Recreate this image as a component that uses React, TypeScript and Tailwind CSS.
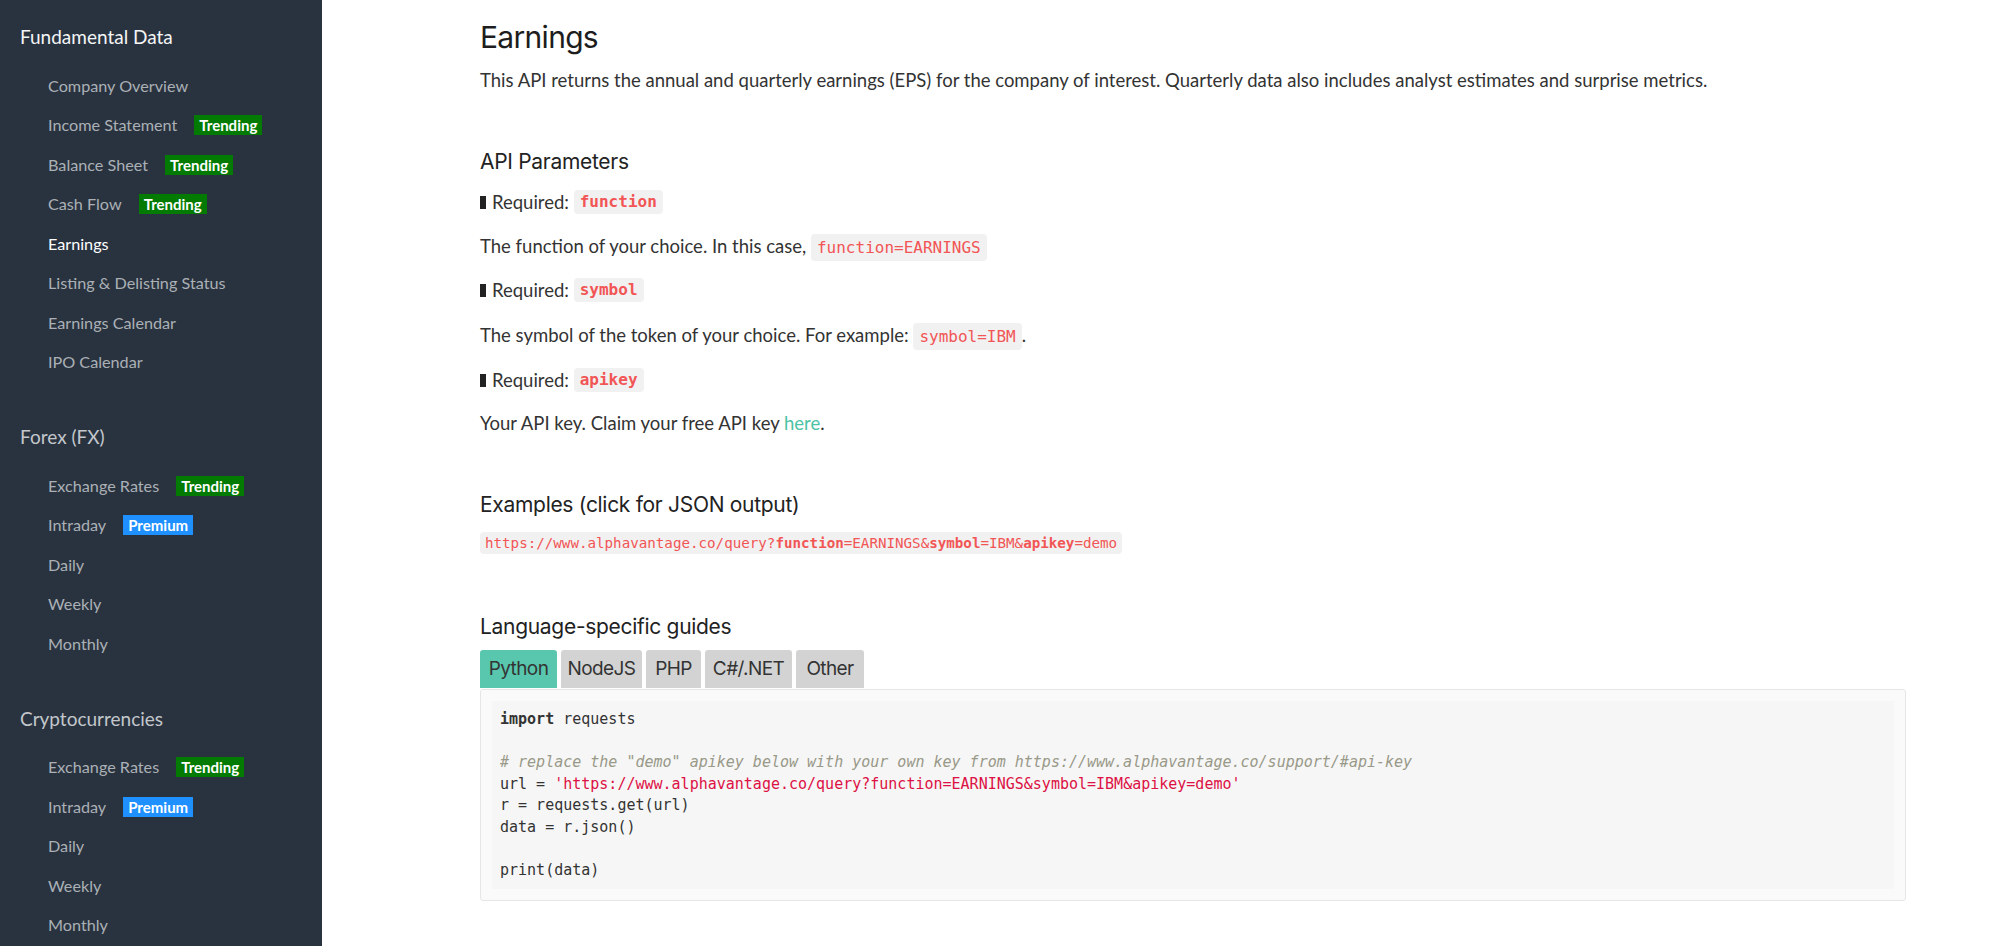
import React from 'react';

type NavItem = { label: string; badge?: 'Trending' | 'Premium'; active?: boolean };
type NavSection = { title: string; active?: boolean; items: NavItem[] };

const sections: NavSection[] = [
  {
    title: 'Fundamental Data',
    active: true,
    items: [
      { label: 'Company Overview' },
      { label: 'Income Statement', badge: 'Trending' },
      { label: 'Balance Sheet', badge: 'Trending' },
      { label: 'Cash Flow', badge: 'Trending' },
      { label: 'Earnings', active: true },
      { label: 'Listing & Delisting Status' },
      { label: 'Earnings Calendar' },
      { label: 'IPO Calendar' },
    ],
  },
  {
    title: 'Forex (FX)',
    items: [
      { label: 'Exchange Rates', badge: 'Trending' },
      { label: 'Intraday', badge: 'Premium' },
      { label: 'Daily' },
      { label: 'Weekly' },
      { label: 'Monthly' },
    ],
  },
  {
    title: 'Cryptocurrencies',
    items: [
      { label: 'Exchange Rates', badge: 'Trending' },
      { label: 'Intraday', badge: 'Premium' },
      { label: 'Daily' },
      { label: 'Weekly' },
      { label: 'Monthly' },
    ],
  },
];

// tab widths measured off the design
const tabs = [
  { label: 'Python', w: 'w-[77px]' },
  { label: 'NodeJS', w: 'w-[81px]' },
  { label: 'PHP', w: 'w-[55px]' },
  { label: 'C#/.NET', w: 'w-[87px]' },
  { label: 'Other', w: 'w-[68px]' },
];

const Badge = ({ kind }: { kind: 'Trending' | 'Premium' }) => (
  <span
    className={`ml-[17px] inline-flex h-[20px] items-center px-[5px] text-[15px] font-bold text-white ${
      kind === 'Trending' ? 'bg-[#037b03]' : 'bg-[#1e90ff]'
    }`}
  >
    {kind}
  </span>
);

const Sidebar = () => (
  <aside className="w-[322px] shrink-0 bg-[#29333f] pt-[25px] pl-[20px] font-['Lato',sans-serif]">
    {sections.map((s, i) => (
      <div key={s.title} className={i > 0 ? 'mt-[43px]' : ''}>
        <h3
          className={`h-[24px] text-[19px] leading-[24px] ${
            s.active ? 'text-[#f4f5f6]' : 'text-[#c3c7cc]'
          }`}
        >
          {s.title}
        </h3>
        <ul className="mt-[17px]">
          {s.items.map((item) => (
            <li
              key={item.label}
              className={`flex h-[39.5px] items-center pl-[28px] text-[16.2px] ${
                item.active ? 'text-white' : 'text-[#abb0b6]'
              }`}
            >
              {item.label}
              {item.badge && <Badge kind={item.badge} />}
            </li>
          ))}
        </ul>
      </div>
    ))}
  </aside>
);

const Code = ({ children, bold }: { children: React.ReactNode; bold?: boolean }) => (
  <code
    className={`rounded-[4px] bg-[#f1f1f1] px-[6px] py-[4px] font-['DejaVu_Sans_Mono',monospace] text-[16px] leading-none text-[#f25555] ${
      bold ? 'font-bold' : ''
    }`}
  >
    {children}
  </code>
);

const Required = ({ name, className }: { name: string; className: string }) => (
  <p className={`flex h-[28px] items-center ${className}`}>
    <span className="mr-[6px] inline-block h-[13px] w-[6px] bg-[#222]" />
    Required:&nbsp;
    <Code bold>{name}</Code>
  </p>
);

const MainContent = () => (
  <main className="ml-[158px] w-[1426px] pt-[19px] font-['Lato',sans-serif] text-[18.5px] leading-[28px] text-[#333]">
    <h1 className="font-['Inter',sans-serif] text-[30px] leading-[36px] font-normal tracking-[-0.7px] text-[#1d1d1d]">
      Earnings
    </h1>
    <p className="mt-[11px] h-[28px]">
      This API returns the annual and quarterly earnings (EPS) for the company of interest. Quarterly data also includes
      analyst estimates and surprise metrics.
    </p>

    <h2 className="mt-[53px] font-['Inter',sans-serif] text-[21px] leading-[30px] text-[#222] tracking-[-0.3px]">
      API Parameters
    </h2>
    <Required name="function" className="mt-[11px]" />
    <p className="mt-[16px] h-[28px]">
      The function of your choice. In this case, <Code>function=EARNINGS</Code>
    </p>
    <Required name="symbol" className="mt-[16px]" />
    <p className="mt-[17px] h-[28px]">
      The symbol of the token of your choice. For example: <Code>symbol=IBM</Code>.
    </p>
    <Required name="apikey" className="mt-[17px]" />
    <p className="mt-[15px] h-[28px]">
      Your API key. Claim your free API key <a className="text-[#4cc3a5]">here</a>.
    </p>

    <h2 className="mt-[53px] font-['Inter',sans-serif] text-[21px] leading-[30px] text-[#222] tracking-[-0.3px]">
      Examples (click for JSON output)
    </h2>
    <div className="mt-[10.5px] flex h-[24px] items-center">
      <a className="rounded-[4px] bg-[#f1f1f1] px-[5px] font-['DejaVu_Sans_Mono',monospace] text-[14.2px] leading-[22px] text-[#f25555]">
        https://www.alphavantage.co/query?<b>function</b>=EARNINGS&amp;<b>symbol</b>=IBM&amp;<b>apikey</b>=demo
      </a>
    </div>

    <h2 className="mt-[57.5px] font-['Inter',sans-serif] text-[21px] leading-[30px] text-[#222] tracking-[-0.3px]">
      Language-specific guides
    </h2>
    <div className="mt-[8px] flex gap-[4px]">
      {tabs.map((t, i) => (
        <button
          key={t.label}
          className={`h-[38px] ${t.w} rounded-t-[3px] text-center font-['Inter',sans-serif] text-[19px] tracking-[-0.6px] text-[#333] ${
            i === 0 ? 'bg-[#58c7ad]' : 'bg-[#d3d3d3]'
          }`}
        >
          {t.label}
        </button>
      ))}
    </div>
    <div className="mt-px rounded-[3px] border border-[#e6e6e6] bg-[#fafafa] px-[11px] pt-[11px] pb-[11px]">
      <pre className="bg-[#f6f6f6] px-[8px] py-[8px] font-['DejaVu_Sans_Mono',monospace] text-[15px] leading-[21.5px] text-[#333]">
        <b>import</b> requests{'\n'}
        {'\n'}
        <i className="text-[#999988]">
          # replace the "demo" apikey below with your own key from https://www.alphavantage.co/support/#api-key
        </i>
        {'\n'}
        url = <span className="text-[#dd1144]">'https://www.alphavantage.co/query?function=EARNINGS&amp;symbol=IBM&amp;apikey=demo'</span>
        {'\n'}r = requests.get(url){'\n'}data = r.json(){'\n'}
        {'\n'}print(data)
      </pre>
    </div>
  </main>
);

export default function App() {
  return (
    <div className="flex h-[946px] w-full overflow-hidden bg-white">
      <Sidebar />
      <MainContent />
    </div>
  );
}
